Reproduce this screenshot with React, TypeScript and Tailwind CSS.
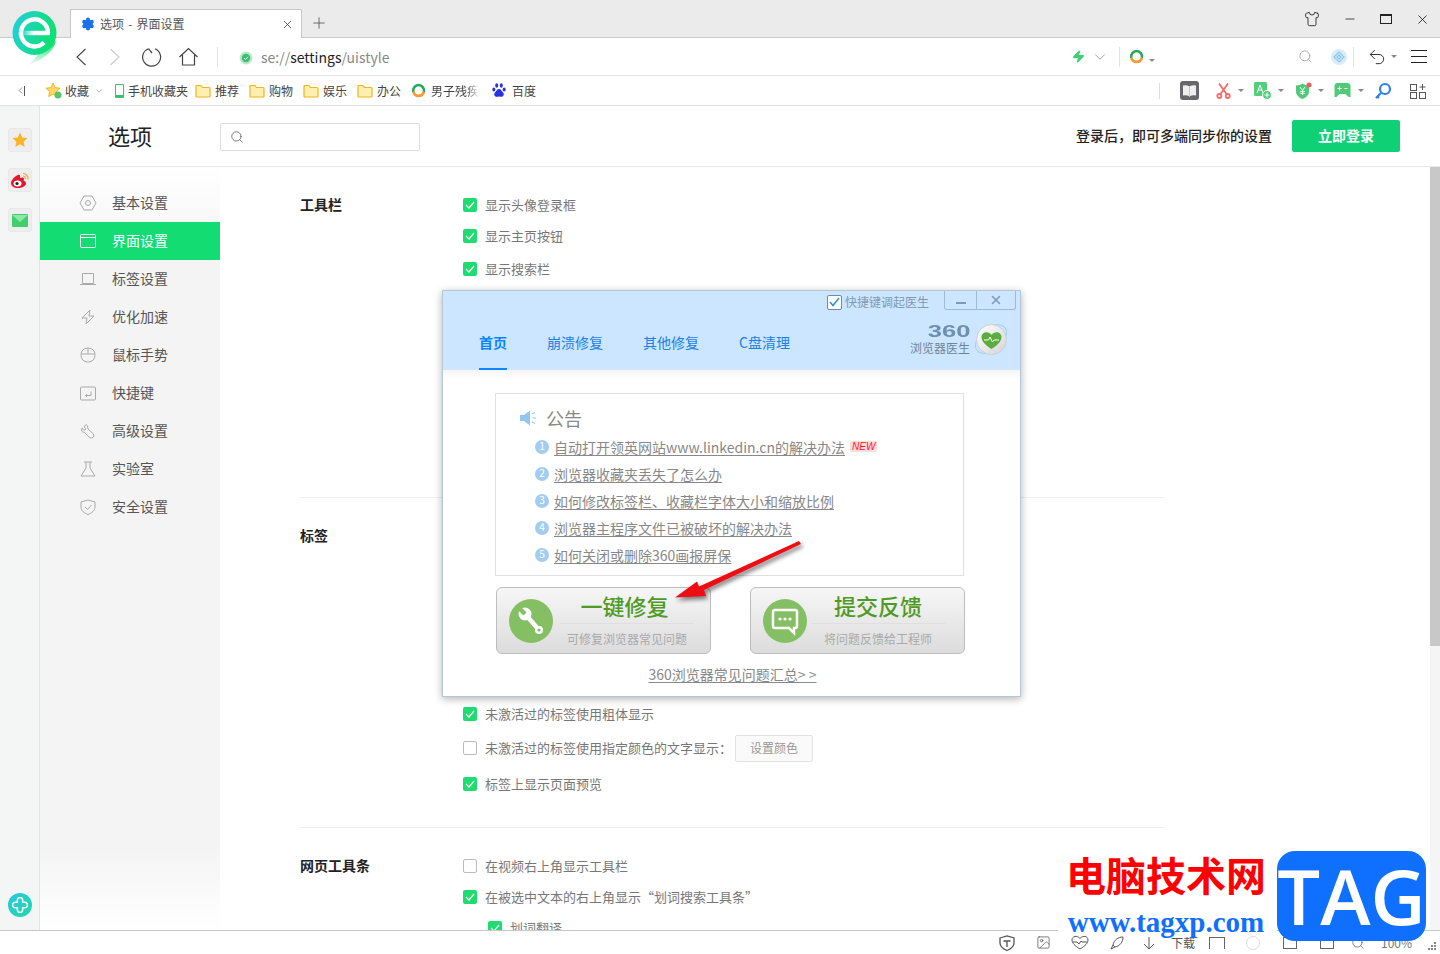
import React from "react";
import { ChevronDown, ChevronLeft, Image, Minus, Plus, Search, Settings, Shirt, Undo2, X, Zap } from "lucide-react";

const CJK = "font-['Noto_Sans_CJK_SC','Noto_Sans',sans-serif]";

const Drop = ({ className = "ml-[5px]" }: { className?: string }) => (
  <span className={`h-0 w-0 border-x-[3px] border-t-[3px] border-x-transparent border-t-[#888] ${className}`} />
);

const Folder = () => (
  <svg width="16" height="14" viewBox="0 0 16 14" className="shrink-0">
    <path d="M1 2.500q0-1 1-1h4l1.500 2H14q1 0 1 1V12q0 1-1 1H2q-1 0-1-1z" fill="#fff0b0" stroke="#f2b319" strokeWidth="1.200" />
  </svg>
);

const Ring = ({ size = 15 }: { size?: number }) => (
  <svg width={size} height={size} viewBox="0 0 16 16" className="shrink-0">
    <path d="M2.500 9.500A5.800 5.800 0 1 1 13.700 9.500" fill="none" stroke="#25a85c" strokeWidth="2.800" />
    <path d="M2.500 9.500A5.800 5.800 0 0 0 13.700 9.500" fill="none" stroke="#f59a35" strokeWidth="2.800" />
  </svg>
);

function Bookmark({ icon, label, className = "", labelClass = "" }: { icon: React.ReactNode; label: string; className?: string; labelClass?: string }) {
  return (
    <div className={`flex items-center text-xs text-[#444] ${className}`}>
      {icon}
      <span className={labelClass}>{label}</span>
    </div>
  );
}

function TitleBar() {
  return (
    <div className="flex h-[38px] shrink-0 items-end border-b border-[#c9c9c9] bg-[#ebebeb] pl-[70px]">
      <div className="-mb-px flex h-[29px] w-[232px] items-center border border-b-0 border-[#c9c9c9] bg-white pl-[10px] pr-[7px] text-xs text-[#555]">
        <Settings size={14} className="fill-[#1a73e8] text-[#1a73e8]" />
        <span className="ml-[5px] grow [word-spacing:1.500px]">选项 - 界面设置</span>
        <X size={13} strokeWidth={1.4} className="text-[#333]" />
      </div>
      <Plus size={18} strokeWidth={1} className="mb-[5px] ml-[8px] text-[#444]" />
      <div className="grow" />
      <div className="mb-[10px] mr-[8px] flex w-[128px] items-center text-[#222]">
        <Shirt size={16} strokeWidth={1.3} />
        <Minus size={14} strokeWidth={1.4} className="ml-[23px]" />
        <span className="ml-[23px] h-[10px] w-[12px] border border-t-2 border-[#222]" />
        <X size={15} strokeWidth={1.4} className="ml-[23px]" />
      </div>
    </div>
  );
}

function AddressBar() {
  return (
    <div className="flex h-[38px] shrink-0 items-center border-b border-[#e2e2e2] bg-white text-[#444]">
      <svg width="12" height="18" viewBox="0 0 12 18" fill="none" stroke="currentColor" strokeWidth="1.100" className="ml-[75px]">
        <path d="M10.500 1L2 9l8.500 8" />
      </svg>
      <svg width="12" height="18" viewBox="0 0 12 18" fill="none" stroke="#ccc" strokeWidth="1.100" className="ml-[22px]">
        <path d="M1.500 1L10 9l-8.500 8" />
      </svg>
      <svg width="20" height="20" viewBox="0 0 20 20" fill="none" stroke="currentColor" strokeWidth="1.200" className="ml-[21px]">
        <path d="M13 1.800A9 9 0 1 1 6.500 1.700M6.500 1.700L10 6" />
      </svg>
      <svg width="19" height="19" viewBox="0 0 19 19" fill="none" stroke="currentColor" strokeWidth="1.200" className="ml-[17px]">
        <path d="M.5 10L9.500 1.500 18.500 10M3.500 8v10h12V8" />
      </svg>
      <span className="ml-[19px] h-5 w-px bg-[#e2e2e2]" />
      <svg width="14" height="14" viewBox="0 0 14 14" className="ml-[21px] mt-[2px]">
        <circle cx="7" cy="7" r="6.500" fill="#b6eac8" />
        <circle cx="7" cy="7" r="4.200" fill="#3bbf72" />
        <path d="M5 7l1.500 1.500L9 5.800" fill="none" stroke="#fff" />
      </svg>
      <span className="ml-[8px] text-sm text-[#888]">
        se://<span className="text-[#222]">settings</span>/uistyle
      </span>
      <div className="grow" />
      <Zap size={13} className="fill-[#3ccf6e] text-[#3ccf6e]" />
      <ChevronDown size={18} strokeWidth={1} className="ml-[6px] text-[#888]" />
      <span className="ml-[10px] h-5 w-px bg-[#e2e2e2]" />
      <span className="ml-[9px] flex">
        <Ring />
      </span>
      <span className="mt-[8px] flex">
        <Drop />
      </span>
      <Search size={15} strokeWidth={1.2} className="ml-[143px] text-[#999]" />
      <svg width="18" height="18" viewBox="0 0 18 18" className="ml-[17px]">
        <circle cx="9" cy="9" r="8" fill="#d8ecfa" />
        <path d="M4 9l5-5 5 5-5 5zM7 9l2-2 2 2-2 2z" fill="none" stroke="#8ec5ee" strokeWidth="1.200" />
      </svg>
      <span className="ml-[5px] h-5 w-px bg-[#e2e2e2]" />
      <Undo2 size={20} strokeWidth={1.1} className="ml-[13px] text-[#222]" />
      <Drop className="ml-[4px]" />
      <div className="ml-[14px] mr-[13px] flex h-[13px] w-4 flex-col justify-between">
        <span className="h-px bg-[#222]" />
        <span className="h-px bg-[#222]" />
        <span className="h-px bg-[#222]" />
      </div>
    </div>
  );
}

function BookmarkBar() {
  return (
    <div className="flex h-[30px] shrink-0 items-center border-b border-[#e2e2e2] bg-white">
      <span className="ml-[15px] flex items-center text-[#555]">
        <ChevronLeft size={11} strokeWidth={1.3} />
        <span className="-ml-[2px] h-[10px] w-px bg-[#555]" />
      </span>
      <Bookmark
        className="ml-[20px] gap-[3px]"
        label="收藏"
        icon={
          <svg width="17" height="17" viewBox="0 0 17 17">
            <path d="M8 1l2.100 4.600 5 .6-3.700 3.400 1 5L8 12l-4.400 2.600 1-5L.9 6.200l5-.6z" fill="#ffd75e" stroke="#e8a825" strokeWidth=".8" />
            <circle cx="13" cy="13" r="3.500" fill="#58c46c" />
          </svg>
        }
      />
      <ChevronDown size={10} strokeWidth={1.2} className="ml-[5px] text-[#666]" />
      <Bookmark
        className="ml-[11px] gap-1"
        label="手机收藏夹"
        icon={<span className="h-[14px] w-[9px] rounded-[1px] border border-b-[3px] border-[#3fbf6b]" />}
      />
      <Bookmark className="ml-[7px] gap-1" icon={<Folder />} label="推荐" />
      <Bookmark className="ml-[10px] gap-1" icon={<Folder />} label="购物" />
      <Bookmark className="ml-[10px] gap-1" icon={<Folder />} label="娱乐" />
      <Bookmark className="ml-[10px] gap-1" icon={<Folder />} label="办公" />
      <Bookmark
        className="ml-[10px] gap-[5px]"
        icon={<Ring />}
        label="男子残疾"
        labelClass="[mask-image:linear-gradient(90deg,#000_75%,transparent)]"
      />
      <Bookmark
        className="ml-[13px] gap-[6px]"
        label="百度"
        icon={
          <svg width="14" height="15" viewBox="0 0 14 15" fill="#2932e1">
            <ellipse cx="4.700" cy="2.500" rx="1.500" ry="2.200" />
            <ellipse cx="9.300" cy="2.500" rx="1.500" ry="2.200" />
            <ellipse cx="1.800" cy="6.500" rx="1.500" ry="2" />
            <ellipse cx="12.200" cy="6.500" rx="1.500" ry="2" />
            <path d="M7 6c2 0 2.500 2 4 3.500s.8 4.500-2 4.300c-1 0-1.300-.4-2-.4s-1 .4-2 .4c-2.800.2-3.500-2.800-2-4.300S5 6 7 6z" />
          </svg>
        }
      />
      <div className="grow" />
      <span className="h-4 w-px bg-[#ddd]" />
      <svg width="19" height="19" viewBox="0 0 19 19" className="ml-[20px]">
        <rect width="19" height="19" rx="3" fill="#67676c" />
        <path d="M3 4.500q3.500-1 6.500 1 3-2 6.500-1v10q-3.500-1-6.500 1-3-2-6.500-1z" fill="#efefef" />
        <path d="M9.500 5.500v10" stroke="#c8c8c8" />
      </svg>
      <svg width="15" height="16" viewBox="0 0 15 16" className="ml-[17px]" fill="none" stroke="#f56a6a" strokeWidth="1.800">
        <path d="M3 .5l7.500 10.500M12 .5L4.500 11" />
        <circle cx="3.300" cy="13" r="2" />
        <circle cx="11.700" cy="13" r="2" />
      </svg>
      <Drop className="ml-[7px]" />
      <svg width="18" height="18" viewBox="0 0 18 18" className="ml-[10px]">
        <rect x="0" y="0" width="13" height="14" rx="1.500" fill="#52cf7a" />
        <path d="M3 11l3-8 3 8M4 8h4" fill="none" stroke="#fff" />
        <circle cx="13" cy="13" r="4.500" fill="#52cf7a" stroke="#fff" />
        <path d="M10.500 13h5M13 10.500v5" stroke="#fff" />
      </svg>
      <Drop className="ml-[6px]" />
      <svg width="17" height="18" viewBox="0 0 17 18" className="ml-[11px]">
        <path d="M1 3.500c2.500 0 5-.8 6.500-2 1.500 1.200 4 2 6.500 2v6c0 3.500-3 6-6.500 7.500C4 15.500 1 13 1 9.500z" fill="#4fcb78" />
        <circle cx="14" cy="3" r="2.500" fill="#f4595b" />
        <path d="M5 5l2.500 3.500L10 5M7.500 8.500V13M5.300 9.500h4.400M5.300 11.300h4.400" fill="none" stroke="#fff" />
      </svg>
      <Drop className="ml-[6px]" />
      <svg width="17" height="15" viewBox="0 0 17 15" className="ml-[10px]">
        <path d="M3 0h11q2 0 2.500 2.500V14h-2l-3-3H5.500l-3 3H.5V2.500Q1 0 3 0z" fill="#4fcb78" />
        <path d="M3.500 5.500h4M5.500 3.500v4M10.500 5.500h3" stroke="#fff" strokeWidth="1.200" />
      </svg>
      <Drop className="ml-[7px]" />
      <svg width="18" height="18" viewBox="0 0 18 18" className="ml-[10px]" fill="none" stroke="#2f80ed" strokeWidth="2.200">
        <circle cx="11" cy="7" r="5" />
        <path d="M7 11l-5 5M3 14l2 2" />
      </svg>
      <svg width="16" height="16" viewBox="0 0 16 16" className="ml-[18px] mr-[14px]" fill="none" stroke="#555">
        <rect x=".5" y="1.500" width="6" height="6" />
        <rect x=".5" y="9.500" width="6" height="6" />
        <rect x="9.500" y="9.500" width="6" height="6" />
        <path d="M12.500 1v6M9.500 4h6" />
      </svg>
    </div>
  );
}

const stroke = { fill: "none", stroke: "currentColor", strokeWidth: 1 };

const navItems: { label: string; icon: React.ReactNode; active?: boolean }[] = [
  { label: "基本设置", icon: <g {...stroke}><path d="M5 2h8l4 7-4 7H5L1 9z" /><circle cx="9" cy="9" r="2.500" /></g> },
  { label: "界面设置", active: true, icon: <g {...stroke}><rect x="1.500" y="2.500" width="15" height="13" rx="1" /><path d="M1.500 5.500h15" /></g> },
  { label: "标签设置", icon: <g {...stroke}><path d="M3.500 3.500h11v10h-11zM1 14.500h16" /></g> },
  { label: "优化加速", icon: <g {...stroke}><path d="M11 2L3 10h5l-1 6 8-8h-5z" /></g> },
  { label: "鼠标手势", icon: <g {...stroke}><rect x="2" y="2" width="14" height="14" rx="6.500" /><path d="M2 8h14M9 2v6" /></g> },
  { label: "快捷键", icon: <g {...stroke}><rect x="1.500" y="3" width="15" height="13" rx="1" /><path d="M12 7.500v4H6.500M8 10l-1.500 1.500L8 13" /></g> },
  { label: "高级设置", icon: <g {...stroke}><path d="M7 2.500L5 5l2 2-2 1.500-2-2.500Q1.500 10 5.500 10.500l5 5q2 1 3.500 0 1.500-1.500.5-3.500l-5.500-5Q9 3 7 2.500z" /></g> },
  { label: "实验室", icon: <g {...stroke}><path d="M5 2h8M7 2v6L2 16h14l-5-8V2" /></g> },
  { label: "安全设置", icon: <g {...stroke}><path d="M2 4l7-2 7 2v5c0 4-3.500 6-7 7.500C5.500 15 2 13 2 9z" /><path d="M6 9l2.500 2.500L12.500 7" /></g> },
];

function Nav() {
  return (
    <div className="h-full w-[180px] shrink-0 bg-[linear-gradient(180deg,#fff_0,#f4f4f4_90px,#f4f4f4_680px,#fff_764px)] pt-[17px]">
      {navItems.map((item) => (
        <div
          key={item.label}
          className={`flex h-[38px] items-center gap-[15px] pl-[39px] text-sm ${
            item.active ? "bg-[#13dd72] text-white" : "text-[#555]"
          }`}
        >
          <svg width="18" height="18" viewBox="0 0 18 18" className={item.active ? "text-white" : "text-[#aaa]"}>
            {item.icon}
          </svg>
          <span className="pb-[2px]">{item.label}</span>
        </div>
      ))}
    </div>
  );
}

function Check({ on = true, label, className = "", children }: { on?: boolean; label: string; className?: string; children?: React.ReactNode }) {
  return (
    <div className={`flex h-5 items-center text-[13px] text-[#777] ${className}`}>
      {on ? (
        <span className="flex h-[14px] w-[14px] items-center justify-center rounded-[2px] bg-[#1fdc70]">
          <svg width="10" height="8" viewBox="0 0 10 8" fill="none" stroke="#fff" strokeWidth="1.200">
            <path d="M1 4l3 3 5-6" />
          </svg>
        </span>
      ) : (
        <span className="h-[14px] w-[14px] rounded-[2px] border border-[#bbb] bg-white" />
      )}
      <span className="ml-2">{label}</span>
      {children}
    </div>
  );
}

const labelClass = "-mt-px w-[164px] pl-px text-sm font-bold leading-5 text-[#222]";

function Content() {
  return (
    <div className="h-full min-w-0 grow overflow-hidden pl-[79px]">
      <div className="w-[866px]">
        <section className="flex h-[331px] border-b border-[#f0f0f0] pt-[28px]">
          <h3 className={labelClass}>工具栏</h3>
          <div>
            <Check label="显示头像登录框" />
            <Check label="显示主页按钮" className="mt-[11px]" />
            <Check label="显示搜索栏" className="mt-[13px]" />
          </div>
        </section>
        <section className="flex h-[330px] border-b border-[#f0f0f0] pt-[28px]">
          <h3 className={labelClass}>标签</h3>
          <div className="pt-[178px]">
            <Check label="未激活过的标签使用粗体显示" />
            <Check on={false} label="未激活过的标签使用指定颜色的文字显示：" className="mt-[14px]">
              <span className="ml-[3px] flex h-[27px] w-[78px] items-center justify-center rounded-[2px] border border-[#e2e2e2] bg-[#fafafa] text-xs text-[#999]">
                设置颜色
              </span>
            </Check>
            <Check label="标签上显示页面预览" className="mt-4" />
          </div>
        </section>
        <section className="flex pt-[28px]">
          <h3 className={labelClass}>网页工具条</h3>
          <div>
            <Check on={false} label="在视频右上角显示工具栏" />
            <Check label="在被选中文本的右上角显示“划词搜索工具条”" className="mt-[11px]" />
            <Check label="划词翻译" className="ml-[25px] mt-[11px]" />
          </div>
        </section>
      </div>
    </div>
  );
}

const doctorTabs = ["崩溃修复", "其他修复", "C盘清理"];
const notices = [
  "自动打开领英网站www.linkedin.cn的解决办法",
  "浏览器收藏夹丢失了怎么办",
  "如何修改标签栏、收藏栏字体大小和缩放比例",
  "浏览器主程序文件已被破坏的解决办法",
  "如何关闭或删除360画报屏保",
];

function BigButton({ title, sub, icon, blockClass, titleClass }: { title: string; sub: string; icon: React.ReactNode; blockClass: string; titleClass: string }) {
  return (
    <div className="flex h-[67px] w-[215px] items-center rounded-[6px] border border-[#bdbdbd] bg-[linear-gradient(180deg,#f6f6f6,#dcdcdc)] pl-3">
      <span className="flex h-[44px] w-[44px] shrink-0 items-center justify-center rounded-full bg-[#85bf63]">{icon}</span>
      <div className={`flex w-[134px] flex-col items-center ${blockClass}`}>
        <span className={`pb-[6px] text-[22px] font-medium leading-[24px] text-[#4f9a23] ${titleClass}`}>{title}</span>
        <span className="w-full border-t border-[#dfdfdf] pt-[5px] text-center text-xs leading-5 text-[#aaa]">{sub}</span>
      </div>
    </div>
  );
}

function DoctorDialog() {
  return (
    <div className="absolute left-[442px] top-[290px] h-[407px] w-[579px] border border-[#b4c7d6] bg-white shadow-[0_2px_8px_rgba(0,0,0,0.3)]">
      <div className="relative h-[79px] border-b border-[#d8e6f2] bg-[#cce6ff]">
        <div className="absolute right-[91px] top-[3px] flex items-center text-xs text-[#7f9ab3]">
          <span className="mr-[3px] flex h-[15px] w-[15px] items-center justify-center rounded-[2px] border border-[#6f8aa5] bg-white">
            <svg width="11" height="10" viewBox="0 0 11 10" fill="none" stroke="#2f8ee8" strokeWidth="1.500">
              <path d="M1 5l3 3.500L10 1" />
            </svg>
          </span>
          快捷键调起医生
        </div>
        <div className="absolute right-[4px] top-0 flex h-[19px] w-[72px] rounded-b-[3px] border border-t-0 border-[#9dbbd6] text-[#7f9ab3]">
          <span className="flex w-[32px] items-end justify-center border-r border-[#9dbbd6] pb-[5px]">
            <span className="h-[2px] w-[10px] bg-[#7f9ab3]" />
          </span>
          <span className="flex grow items-center justify-center">
            <X size={14} strokeWidth={2.6} />
          </span>
        </div>
        <div className="flex h-full items-end pl-[36px] text-sm text-[#1a80e6]">
          <span className="-mb-px w-[28px] border-b-2 border-[#0a84ff] pb-[16px] font-bold leading-5 text-[#0a84ff]">首页</span>
          {doctorTabs.map((tab) => (
            <span key={tab} className="ml-[40px] pb-[17px] leading-5">
              {tab}
            </span>
          ))}
        </div>
        <div className="absolute right-[10px] top-[29px] flex items-center">
          <div className="flex flex-col items-end text-[#6f8499]">
            <span className="origin-right scale-x-[1.5] font-['Liberation_Sans',sans-serif] text-[17px] font-bold leading-[18px] text-[#6f8fb0]">360</span>
            <span className="text-xs leading-[14px]">浏览器医生</span>
          </div>
          <svg width="38" height="38" viewBox="0 0 38 38" className="ml-[2px]">
            <defs>
              <linearGradient id="orb" x1="0" y1="0" x2="1" y2="1">
                <stop offset="0" stopColor="#fff" />
                <stop offset="1" stopColor="#d4d4d4" />
              </linearGradient>
            </defs>
            <ellipse cx="19" cy="19" rx="18" ry="11" fill="none" stroke="#a9cfee" transform="rotate(-40 19 19)" />
            <circle cx="19.500" cy="19.500" r="15" fill="url(#orb)" stroke="#c5d0d8" />
            <path d="M19.500 29C13 25 9.500 21 9.500 17c0-5 7-6.500 10-2 3-4.500 10-3 10 2 0 4-3.500 8-10 12z" fill="#5aae3c" />
            <path d="M12 20h4.500l1.500-3 2.500 5 1.500-2h5" fill="none" stroke="#fff" />
          </svg>
        </div>
      </div>
      <div className="h-[10px] bg-[linear-gradient(180deg,#f5f5f5,#fff)]" />
      <div className="ml-[52px] mt-[13px] h-[183px] w-[469px] border border-[#e0e0e0] pl-[24px] pt-[11px]">
        <div className="flex items-center text-lg leading-[26px] text-[#888]">
          <svg width="18" height="16" viewBox="0 0 18 16">
            <path d="M0 5h4l6-4.500v15L4 11H0z" fill="#93c5ee" />
            <path d="M12 4l3-1.500M12.500 8H16M12 12l3 1.500" stroke="#93c5ee" />
          </svg>
          <span className="ml-[8px]">公告</span>
        </div>
        <ul className="ml-[15px] mt-[2px]">
          {notices.map((text, i) => (
            <li key={text} className="flex h-[27px] items-center text-sm text-[#888]">
              <span className="flex h-[14px] w-[14px] items-center justify-center rounded-full bg-[#a3cdf0] text-[10px] text-white">
                {i + 1}
              </span>
              <span className="ml-[5px] underline underline-offset-2">{text}</span>
              {i === 0 && (
                <span className="ml-[5px] rounded-[2px] bg-[#fbdcdf] px-[2px] font-['Liberation_Sans',sans-serif] text-[10px] italic leading-[11px] text-[#f22]">NEW</span>
              )}
            </li>
          ))}
        </ul>
      </div>
      <div className="ml-[53px] mt-[11px] flex gap-[39px]">
        <BigButton
          title="一键修复"
          sub="可修复浏览器常见问题"
          blockClass="ml-[7px]"
          titleClass="pr-[5px]"
          icon={
            <svg width="28" height="30" viewBox="0 0 28 30" fill="none">
              <path d="M9 9l13 15" stroke="#fff" strokeWidth="4.500" />
              <circle cx="8" cy="8" r="6.500" fill="#fff" />
              <path d="M8 8L2 2" stroke="#85bf63" strokeWidth="4.500" />
              <circle cx="22" cy="24" r="4" fill="#fff" />
              <circle cx="22" cy="24" r="1.500" fill="#85bf63" />
            </svg>
          }
        />
        <BigButton
          title="提交反馈"
          sub="将问题反馈给工程师"
          blockClass="ml-[4px]"
          titleClass=""
          icon={
            <svg width="30" height="30" viewBox="0 0 30 30" fill="none">
              <path d="M5 4h20q2 0 2 2v14q0 2-2 2h-1v5l-5-5H5q-2 0-2-2V6q0-2 2-2z" stroke="#fff" strokeWidth="2.500" />
              <circle cx="10" cy="13" r="1.600" fill="#fff" />
              <circle cx="15" cy="13" r="1.600" fill="#fff" />
              <circle cx="20" cy="13" r="1.600" fill="#fff" />
            </svg>
          }
        />
      </div>
      <div className="mt-[10px] pl-[2px] text-center text-sm leading-5 text-[#888] underline underline-offset-2">360浏览器常见问题汇总&gt; &gt;</div>
    </div>
  );
}

function StatusBar() {
  return (
    <div className="flex h-6 shrink-0 items-center border-t border-[#c8c8c8] bg-white pl-[998px] text-[#555]">
      <svg width="18" height="18" viewBox="0 0 18 18" fill="none" stroke="currentColor" strokeWidth="1.300">
        <path d="M2 4l7-2 7 2v5c0 4-3.500 6-7 7.500C5.500 15 2 13 2 9z" />
        <path d="M5.500 7h7M9 7v6" />
      </svg>
      <Image size={15} strokeWidth={1.2} className="ml-[20px]" />
      <svg width="18" height="15" viewBox="0 0 18 15" fill="none" stroke="currentColor" className="ml-[20px]">
        <path d="M9 14C4 11 1 8 1 5c0-4 5-5 8-1.500C12 0 17 1 17 5c0 3-3 6-8 9z" />
        <path d="M2 7h4l2 2 2-3 1 1h5" />
      </svg>
      <svg width="16" height="16" viewBox="0 0 16 16" fill="none" stroke="currentColor" className="ml-[20px]">
        <path d="M14 2C9 2 5 5 4 10l2 2c5-1 8-5 8-10zM4 10l-2 4 4-2" />
      </svg>
      <svg width="14" height="14" viewBox="0 0 14 14" fill="none" stroke="currentColor" className="ml-[17px]">
        <path d="M7 1v12M2 8l5 5 5-5" />
      </svg>
      <span className="ml-[15px] text-xs">下载</span>
      <span className="ml-[14px] h-3 w-4 border-x border-t border-[#666]" />
      <span className="ml-[21px] h-[14px] w-[14px] rounded-full border border-[#ddd]" />
      <span className="ml-[23px] h-3 w-[14px] border border-[#666]" />
      <span className="ml-[23px] h-3 w-[14px] border border-[#666]" />
      <Search size={14} strokeWidth={1.2} className="ml-[17px]" />
      <span className="ml-[16px] text-xs text-[#777]">100%</span>
      <svg width="8" height="8" viewBox="0 0 8 8" fill="#888" className="ml-auto mr-[4px] mt-[6px]">
        <rect x="6" y="0" width="2" height="2" />
        <rect x="3" y="3" width="2" height="2" />
        <rect x="6" y="3" width="2" height="2" />
        <rect x="0" y="6" width="2" height="2" />
        <rect x="3" y="6" width="2" height="2" />
        <rect x="6" y="6" width="2" height="2" />
      </svg>
    </div>
  );
}

function Watermark() {
  return (
    <>
      <div className="absolute left-[1058px] top-[850px] flex h-[85px] w-[219px] flex-col items-center bg-white pr-[3px]">
        <span className="text-[40px] font-bold leading-[48px] text-[#f00]">电脑技术网</span>
        <span className="mt-[9px] font-['Liberation_Serif',serif] text-[29px] font-bold leading-[30px] text-[#0f6fff]">www.tagxp.com</span>
      </div>
      <div className="absolute left-[1277px] top-[851px] flex h-[90px] w-[149px] items-center justify-center rounded-[18px] bg-[#0f6fff] font-['Open_Sans',sans-serif] text-[76px] font-semibold leading-none text-white">
        TAG
      </div>
    </>
  );
}

export default function App() {
  return (
    <div className={`relative flex h-[954px] w-[1440px] flex-col overflow-hidden bg-white ${CJK}`}>
      <TitleBar />
      <AddressBar />
      <BookmarkBar />
      <div className="flex min-h-0 grow">
        <aside className="flex w-[40px] shrink-0 flex-col items-center gap-4 border-r border-[#e3e3e3] bg-[#f4f6f6] pt-[22px]">
          <span className="flex h-6 w-6 items-center justify-center rounded-[3px] border border-[#e8e8e8] bg-[#eeeeee]">
            <svg width="16" height="16" viewBox="0 0 16 16">
              <path d="M8 .5l2.300 5 5.200.6-3.900 3.600 1.100 5.300L8 12.300 3.300 15l1.100-5.300L.5 6.100l5.200-.6z" fill="#fbb429" />
            </svg>
          </span>
          <span className="flex h-6 w-6 items-center justify-center rounded-[3px] border border-[#e8e8e8] bg-[#eeeeee]">
            <svg width="20" height="17" viewBox="0 0 20 17">
              <path d="M8 16C4 16 1 14 1 11c0-3 4-7 7-8 2-.6 2.500 1 2 3 3-1.500 5 0 3.500 2.500C15 9 16 10 16 11.500 16 14 12 16 8 16z" fill="#e6162d" />
              <ellipse cx="7.500" cy="11.500" rx="4" ry="3" fill="#fff" />
              <circle cx="7" cy="11.500" r="1.600" fill="#222" />
              <path d="M13 1.500a5 5 0 0 1 5 6M13 4a2.500 2.500 0 0 1 2.500 3" fill="none" stroke="#f5a623" strokeWidth="1.200" />
            </svg>
          </span>
          <span className="flex h-6 w-6 items-center justify-center rounded-[3px] border border-[#e8e8e8] bg-[#eeeeee]">
            <svg width="16" height="13" viewBox="0 0 16 13">
              <rect width="16" height="13" rx="1" fill="#3fcf6d" />
              <path d="M0 1h16L8 8z" fill="#8ee9a6" />
            </svg>
          </span>
          <div className="grow" />
          <span className="mb-[13px] flex h-6 w-6 items-center justify-center rounded-full bg-[linear-gradient(135deg,#25c8e0,#25d9a8)]">
            <svg width="16" height="16" viewBox="0 0 15 15" fill="none" stroke="#fff" strokeWidth="1.400">
              <path d="M5 3a2.500 2.500 0 0 1 5 0v2h2a2.500 2.500 0 0 1 0 5h-2v2a2.500 2.500 0 0 1-5 0v-2H3a2.500 2.500 0 0 1 0-5h2z" />
            </svg>
          </span>
        </aside>
        <div className="flex min-w-0 grow flex-col">
          <header className="flex h-[61px] shrink-0 items-center border-b border-[#e8e8e8]">
            <h1 className="ml-[68px] w-[112px] pb-[2px] text-[22px] font-normal text-[#222]">选项</h1>
            <div className="mt-[2px] flex h-[28px] w-[200px] items-center rounded-[2px] border border-[#ddd] pl-[9px]">
              <Search size={14} strokeWidth={1.3} className="text-[#555]" />
            </div>
            <div className="grow" />
            <span className="pb-[2px] text-sm font-medium text-[#222]">登录后，即可多端同步你的设置</span>
            <button className="ml-[20px] mr-[40px] h-[32px] w-[108px] rounded-[2px] bg-[#10d076] pb-[2px] text-sm font-bold text-white">立即登录</button>
          </header>
          <div className="flex min-h-0 grow">
            <Nav />
            <Content />
            <div className="w-[10px] shrink-0 bg-[#f5f5f5]">
              <div className="h-[479px] bg-[#c8c8c8]" />
            </div>
          </div>
        </div>
      </div>
      <StatusBar />

      {/* browser logo sits over the tab strip */}
      <svg width="50" height="58" viewBox="0 0 50 58" className="absolute left-[10px] top-[9px]">
        <defs>
          <linearGradient id="logo" x1="0" y1="0" x2="1" y2="0.300">
            <stop offset="0" stopColor="#22cfe0" />
            <stop offset="1" stopColor="#0fe070" />
          </linearGradient>
          <linearGradient id="tail" x1="0" y1="0" x2="0" y2="1">
            <stop offset="0" stopColor="#0fe070" />
            <stop offset="1" stopColor="#0fe070" stopOpacity="0" />
          </linearGradient>
          <linearGradient id="bar" x1="0" y1="0" x2="1" y2="0">
            <stop offset="0" stopColor="#fff" stopOpacity="0.100" />
            <stop offset="0.400" stopColor="#fff" />
          </linearGradient>
        </defs>
        <path d="M46 32Q42 48 16 57q9-6 13-13z" fill="url(#tail)" />
        <circle cx="24.500" cy="24" r="22" fill="url(#logo)" />
        <path d="M38 24A13.500 13.500 0 1 0 34 33.500" fill="none" stroke="#fff" strokeWidth="4.500" />
        <rect x="13" y="21.800" width="27" height="4.400" fill="url(#bar)" />
      </svg>

      <DoctorDialog />

      {/* red arrow pasted over the dialog */}
      <svg width="140" height="70" viewBox="0 0 140 70" className="absolute left-[670px] top-[535px] drop-shadow-[2px_3px_2px_rgba(0,0,0,0.5)]">
        <path d="M5 62.500L27 46.500l2 5L129 6l2 3L34 55l2 6z" fill="#ee0d12" />
      </svg>

      <Watermark />
    </div>
  );
}
